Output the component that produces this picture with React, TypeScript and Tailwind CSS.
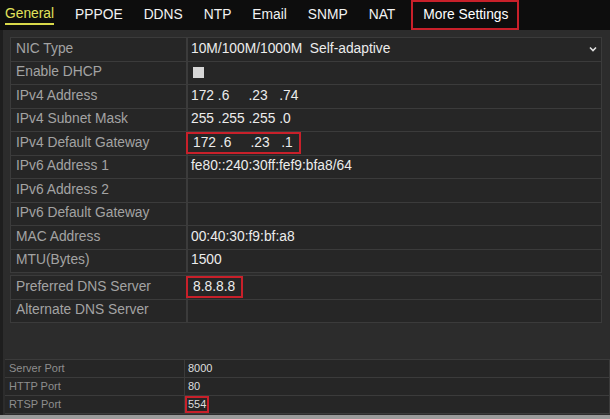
const tabs = ['General', 'PPPOE', 'DDNS', 'NTP', 'Email', 'SNMP', 'NAT', 'More Settings'];

type Row = { label: string; value?: string; box?: boolean; check?: boolean; select?: boolean };

const mainRows: Row[] = [
  { label: 'NIC Type', value: '10M/100M/1000M  Self-adaptive', select: true },
  { label: 'Enable DHCP', check: true },
  { label: 'IPv4 Address', value: '172 .6     .23   .74' },
  { label: 'IPv4 Subnet Mask', value: '255 .255 .255 .0' },
  { label: 'IPv4 Default Gateway', value: '172 .6     .23   .1', box: true },
  { label: 'IPv6 Address 1', value: 'fe80::240:30ff:fef9:bfa8/64' },
  { label: 'IPv6 Address 2' },
  { label: 'IPv6 Default Gateway' },
  { label: 'MAC Address', value: '00:40:30:f9:bf:a8' },
  { label: 'MTU(Bytes)', value: '1500' },
];

const dnsRows: Row[] = [
  { label: 'Preferred DNS Server', value: '8.8.8.8', box: true },
  { label: 'Alternate DNS Server' },
];

const portRows: Row[] = [
  { label: 'Server Port', value: '8000' },
  { label: 'HTTP Port', value: '80' },
  { label: 'RTSP Port', value: '554', box: true },
];

function TableRow({ row }: { row: Row }) {
  return (
    <div className="flex h-[23.5px] border-b border-[#3b3b3b]">
      <div className="w-[177px] flex items-center pl-[5px] text-[13.8px] text-[#a3a3a3] border-r-2 border-[#3b3b3b]">
        {row.label}
      </div>
      <div className="flex-1 flex items-center pr-[4px] text-[13.8px] text-[#ececec]">
        {row.check && <span className="ml-[5px] w-[11px] h-[11px] bg-[#d6d6d6]" />}
        {row.value && (
          <span
            className={
              'whitespace-pre h-[22px] flex items-center ' +
              (row.box
                ? 'border-2 border-[#c8202a] -ml-[2px] pl-[5px] pr-[6px]'
                : 'border-2 border-transparent pl-[1px]')
            }
          >
            {row.value}
          </span>
        )}
        {row.select && (
          <svg className="ml-auto" width="8" height="6" viewBox="0 0 8 6">
            <path d="M1 1.5 L4 4.5 L7 1.5" stroke="#e0e0e0" strokeWidth="1.6" fill="none" />
          </svg>
        )}
      </div>
    </div>
  );
}

export default function App() {
  return (
    <div
      className="w-[610px] h-[419px] bg-[#2c2c2c] overflow-hidden flex flex-col"
      style={{ fontFamily: '"Liberation Sans", Arial, sans-serif' }}
    >
      <div className="h-[30px] bg-[#0d0d0d] flex items-center pl-[5px] gap-[21px] shrink-0">
        {tabs.map((t, i) => (
          <div
            key={t}
            className={
              'text-[13.8px] leading-none ' +
              (i === 0
                ? 'text-[#e2e25c] border-b-2 border-[#d8d84a] pb-[2px] mt-[2px]'
                : i === tabs.length - 1
                ? 'text-white border-2 border-[#c8202a] pl-[10px] pr-[9px] py-[6px] -ml-[5px]'
                : 'text-[#f2f2f2]')
            }
          >
            {t}
          </div>
        ))}
      </div>

      <div className="flex-1 flex flex-col border-l-[3px] border-[#1e1e1e]">
        <div className="mt-[7px] ml-[7px] w-[592px] bg-[#262626] border-t border-l border-r border-[#3b3b3b]">
          {mainRows.map((r) => (
            <TableRow key={r.label} row={r} />
          ))}
        </div>
        <div className="mt-[2px] ml-[7px] w-[592px] bg-[#262626] border-t border-l border-r border-[#3b3b3b]">
          {dnsRows.map((r) => (
            <TableRow key={r.label} row={r} />
          ))}
        </div>

        <div className="mt-[36px] ml-[2px] w-[605px] bg-[#262626] border-t border-r border-[#3b3b3b]">
          {portRows.map((r) => (
            <div key={r.label} className="flex h-[18px] border-b border-[#3b3b3b]">
              <div className="w-[180px] flex items-center pl-[4px] text-[11px] text-[#8e8e8e] border-r border-[#3b3b3b]">
                {r.label}
              </div>
              <div className="flex-1 flex items-center text-[11px] text-[#dedede]">
                <span
                  className={
                    'px-[1px] h-[17px] flex items-center ' +
                    (r.box ? 'border-2 border-[#c8202a]' : 'border-2 border-transparent')
                  }
                >
                  {r.value}
                </span>
              </div>
            </div>
          ))}
        </div>
        <div className="flex-1" />
        <div className="h-[4px] bg-[#9a9a9a] -ml-[3px]" />
      </div>
    </div>
  );
}
